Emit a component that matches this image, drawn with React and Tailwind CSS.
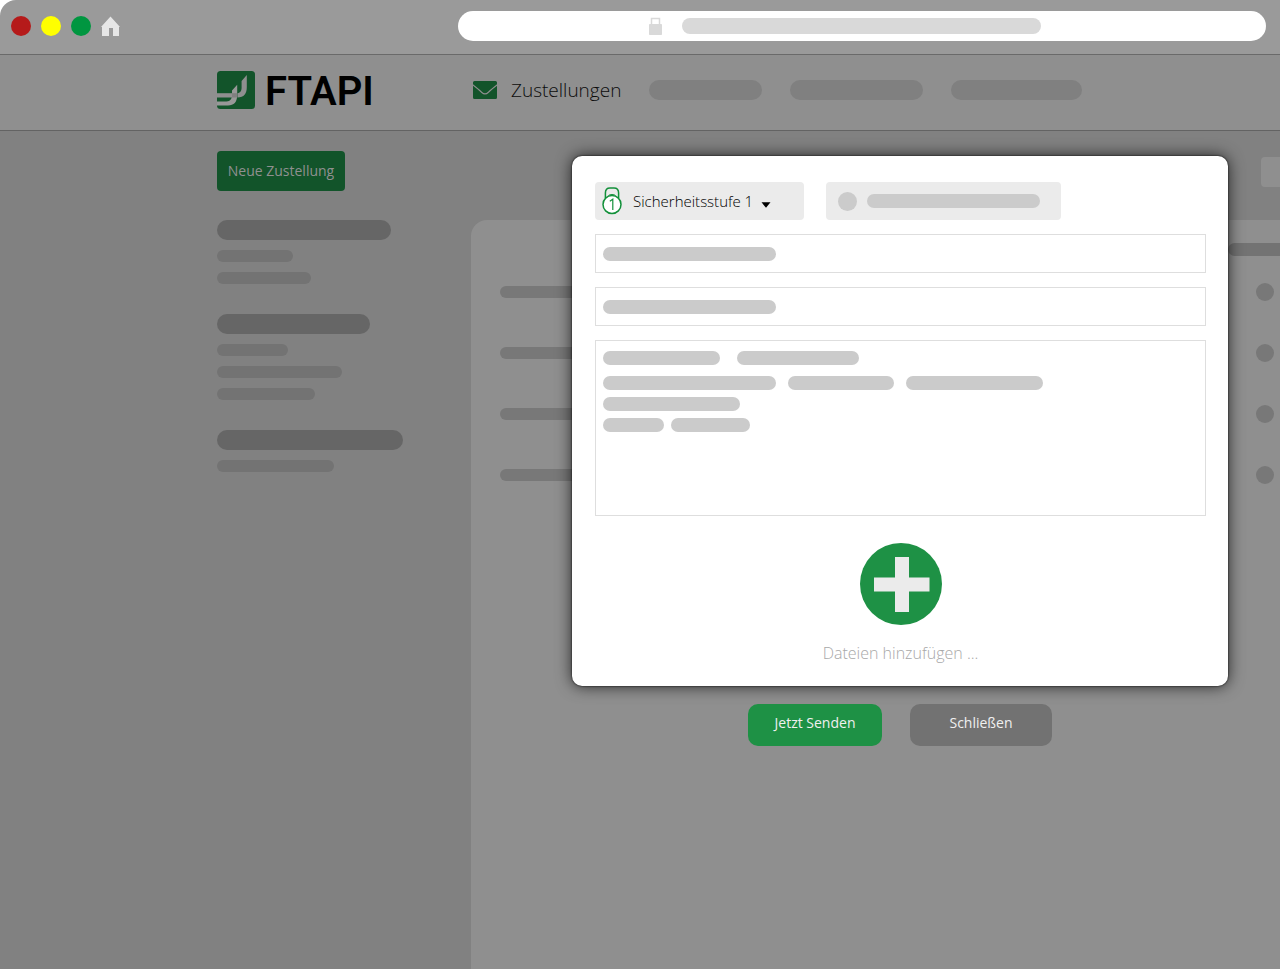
import React from "react";

const Bar = ({ className }) => <span className={`block shrink-0 rounded-full ${className}`} />;

const HomeIcon = () => (
  <svg viewBox="0 0 20 20" className="h-5 w-5" fill="#e6e6e6" aria-hidden="true">
    <path d="M9.500 0.500 L19 11 H18 V20 H12 V12 H8 V20 H1 V11 H0 Z" />
  </svg>
);

const LockIcon = () => (
  <svg viewBox="0 0 13 18" className="h-[18px] w-[13px] shrink-0" aria-hidden="true">
    <path d="M2.500 7.500 V1.500 H10.500 V7.500" fill="none" stroke="#d9d9d9" strokeWidth="1.500" />
    <rect x="0" y="7" width="13" height="11" rx="0.8" fill="#d9d9d9" />
  </svg>
);

const LogoMark = () => (
  <svg viewBox="0 0 38 38" className="h-[38px] w-[38px] shrink-0" aria-hidden="true">
    <rect width="38" height="38" rx="3.5" fill="#12542a" />
    <path d="M0 22.200 H15 V26.500 H0 Z" fill="#8f8f8f" />
    <path d="M29.800 4 V16 C29.800 23 27 26.300 20.500 26.500 V22.200 C23.700 21.600 24.600 19.500 24.600 16.500 V10 Z" fill="#8f8f8f" />
    <path d="M20.200 13.800 V24 C20.200 31 17 34.500 11 34.500 H0 V30.400 H9.500 C13.500 30.400 15 27.500 15 24 V19.500 Z" fill="#989898" />
    <path d="M15 22.200 H20.200 V26.500 H15 Z" fill="#808080" />
  </svg>
);

const MailIcon = () => (
  <svg viewBox="0 0 24 18" className="h-[18px] w-6 shrink-0" fill="#12542a" aria-hidden="true">
    <path d="M1.5 0 H22.5 Q24 0 24 1.5 V3.2 C20.5 6 17.5 8.300 14.8 11 Q12 13.500 9.200 11 C6.500 8.300 3.500 6 0 3.200 V1.500 Q0 0 1.500 0 Z" />
    <path d="M0 4.700 C3 7 6 9.500 8.500 12 Q12 15 15.500 12 C18 9.500 21 7 24 4.700 V16.500 Q24 18 22.500 18 H1.500 Q0 18 0 16.500 Z" />
  </svg>
);

const LevelIcon = () => (
  <svg viewBox="0 0 20 28" className="h-7 w-5" fill="none" stroke="#12903a" aria-hidden="true">
    <path d="M3.4 11 V6 Q3.400 1 8 1 H12 Q16.600 1 16.600 6 V11" strokeWidth="1.500" />
    <path d="M6.300 9 Q7 7.500 10 7.500 Q13 7.500 13.700 9" strokeWidth="1" />
    <circle cx="10" cy="17.500" r="9" fill="#fff" strokeWidth="1.500" />
    <path d="M7.800 14.200 L10.800 12.200 V23" strokeWidth="1.200" />
  </svg>
);

const folders = [
  { title: "w-[174px]", items: ["w-[76px]", "w-[94px]"] },
  { title: "w-[153px]", items: ["w-[71px]", "w-[125px]", "w-[98px]"] },
  { title: "w-[186px]", items: ["w-[117px]"] },
];

const messageLines = [
  { row: "mb-1 gap-[17px]", bars: ["w-[117px]", "w-[122px]"] },
  { row: "gap-3", bars: ["w-[173px]", "w-[106px]", "w-[137px]"] },
  { row: "", bars: ["w-[137px]"] },
  { row: "gap-[7px]", bars: ["w-[61px]", "w-[79px]"] },
];

function TextField({ label }) {
  return (
    <div className="relative flex h-[39px] items-center border border-[#dedede] pl-[7px]">
      <Bar className="h-[14px] w-[173px] bg-[#cbcbcb]" />
      <input type="text" aria-label={label} className="absolute inset-0 bg-transparent px-2" />
    </div>
  );
}

function BrowserBar() {
  return (
    <div className="flex h-[55px] items-center rounded-tl-2xl border-b border-[#6a6a6a] bg-[#9a9a9a] pr-[14px] pb-0.5">
      <div className="flex w-[458px] shrink-0 items-center gap-[10px] pl-[11px]">
        <span className="h-5 w-5 rounded-full bg-[#b51a1a]" />
        <span className="h-5 w-5 rounded-full bg-[#ffff00]" />
        <span className="h-5 w-5 rounded-full bg-[#009640]" />
        <HomeIcon />
      </div>
      <div className="flex h-[30px] flex-1 items-center gap-5 rounded-full bg-white pl-[191px]">
        <LockIcon />
        <Bar className="h-4 w-[359px] bg-[#d9d9d9]" />
      </div>
    </div>
  );
}

function Header() {
  return (
    <header className="flex h-[76px] items-center border-b border-[#636363] bg-[#8f8f8f] pb-[5px] pl-[217px]">
      <div className="flex w-64 shrink-0 items-center gap-[10px]">
        <LogoMark />
        <span className="pt-1 font-['Roboto',sans-serif] text-[40px] leading-[40px] font-semibold text-black">FTAPI</span>
      </div>
      <nav className="flex items-center gap-7">
        <a href="#zustellungen" className="flex items-center gap-[14px] text-[19px] leading-6 text-[#0c0c0c]">
          <MailIcon />
          Zustellungen
        </a>
        <Bar className="h-5 w-[113px] bg-[#808080]" />
        <Bar className="h-5 w-[133px] bg-[#808080]" />
        <Bar className="h-5 w-[131px] bg-[#808080]" />
      </nav>
    </header>
  );
}

function Sidebar() {
  return (
    <aside className="flex w-[471px] shrink-0 flex-col items-start pt-5 pl-[217px]">
      <button type="button" className="h-10 w-32 rounded bg-[#12542a] text-sm font-normal text-[#909090]">
        Neue Zustellung
      </button>
      <div className="mt-[29px] flex flex-col gap-[30px]">
        {folders.map((folder) => (
          <div key={folder.title} className="flex flex-col gap-[10px]">
            <Bar className={`h-5 bg-[#666666] ${folder.title}`} />
            {folder.items.map((width) => (
              <Bar key={width} className={`h-3 bg-[#737373] ${width}`} />
            ))}
          </div>
        ))}
      </div>
    </aside>
  );
}

function Deliveries() {
  return (
    <main className="flex flex-1 flex-col pt-[26px]">
      <div className="mb-[33px] h-[30px] w-[19px] self-end rounded-l bg-[#8f8f8f]" />
      <div className="flex-1 rounded-tl-2xl bg-[#8f8f8f] pt-[23px]">
        <div className="mb-[5px] ml-auto h-[13px] w-[52px] rounded-l-full bg-[#737373]" />
        {[0, 1, 2, 3].map((row) => (
          <div key={row} className="flex h-[61px] items-center justify-between pr-1.5 pl-[29px]">
            <Bar className="h-3 w-40 bg-[#787878]" />
            <Bar className="h-[18px] w-[18px] bg-[#787878]" />
          </div>
        ))}
      </div>
    </main>
  );
}

function DeliveryForm() {
  return (
    <form className="absolute inset-x-0 top-[156px] pr-[52px] pl-[572px]">
      <div
        role="dialog"
        aria-label="Neue Zustellung"
        className="flex flex-col gap-[14px] rounded-[10px] bg-white pt-[26px] pr-[22px] pb-[21px] pl-[23px] shadow-[0_0_2px_#000000,0_0_16px_rgba(0,0,0,0.75)]"
      >
        <div className="flex gap-[22px]">
          <div className="relative h-[38px] w-[209px]">
            <select
              aria-label="Sicherheitsstufe"
              className="h-full w-full appearance-none rounded bg-[#ebebeb] pl-[38px] text-[15px] text-black"
            >
              <option>Sicherheitsstufe 1</option>
            </select>
            <span className="pointer-events-none absolute top-[5px] left-[7px]">
              <LevelIcon />
            </span>
            <svg viewBox="0 0 10 6" className="pointer-events-none absolute top-5 left-[166px] h-1.5 w-[10px]" aria-hidden="true">
              <path d="M0.500 0.300 H9.500 L5 5.800 Z" fill="#000" />
            </svg>
          </div>
          <button type="button" aria-label="Optionen" className="flex h-[38px] w-[235px] items-center gap-[10px] rounded bg-[#ebebeb] pl-3">
            <Bar className="h-[19px] w-[19px] bg-[#cbcbcb]" />
            <Bar className="h-[14px] w-[173px] bg-[#cbcbcb]" />
          </button>
        </div>
        <TextField label="Empfänger" />
        <TextField label="Betreff" />
        <div className="relative flex h-[176px] flex-col gap-[7px] border border-[#dedede] pt-[10px] pl-[7px]">
          {messageLines.map((line, i) => (
            <div key={i} className={`flex ${line.row}`}>
              {line.bars.map((width) => (
                <Bar key={width} className={`h-[14px] bg-[#cbcbcb] ${width}`} />
              ))}
            </div>
          ))}
          <textarea aria-label="Nachricht" className="absolute inset-0 resize-none bg-transparent p-2" />
        </div>
        <button type="button" className="mt-[13px] flex flex-col items-center gap-4 self-center text-base text-[#a8a8a8]">
          <svg viewBox="0 0 82 82" className="h-[82px] w-[82px]" aria-hidden="true">
            <circle cx="41" cy="41" r="41" fill="#1e9145" />
            <path d="M35 14 H49 V34.500 H69.500 V48.500 H49 V69 H35 V48.500 H14 V34.500 H35 Z" fill="#ebebeb" />
          </svg>
          Dateien hinzufügen ...
        </button>
      </div>
      <div className="mt-[18px] flex justify-center gap-7 text-sm font-normal text-[#f0f0f0]">
        <button type="submit" className="h-[42px] w-[134px] rounded-[10px] bg-[#1e9145] pb-1">
          Jetzt Senden
        </button>
        <button type="button" className="h-[42px] w-[142px] rounded-[10px] bg-[#727272] pb-1">
          Schließen
        </button>
      </div>
    </form>
  );
}

export default function App() {
  return (
    <div className="relative flex min-h-screen flex-col overflow-hidden bg-white font-['Open_Sans',sans-serif] font-light">
      <BrowserBar />
      <Header />
      <div className="flex flex-1 bg-[#818181]">
        <Sidebar />
        <Deliveries />
      </div>
      <DeliveryForm />
    </div>
  );
}
